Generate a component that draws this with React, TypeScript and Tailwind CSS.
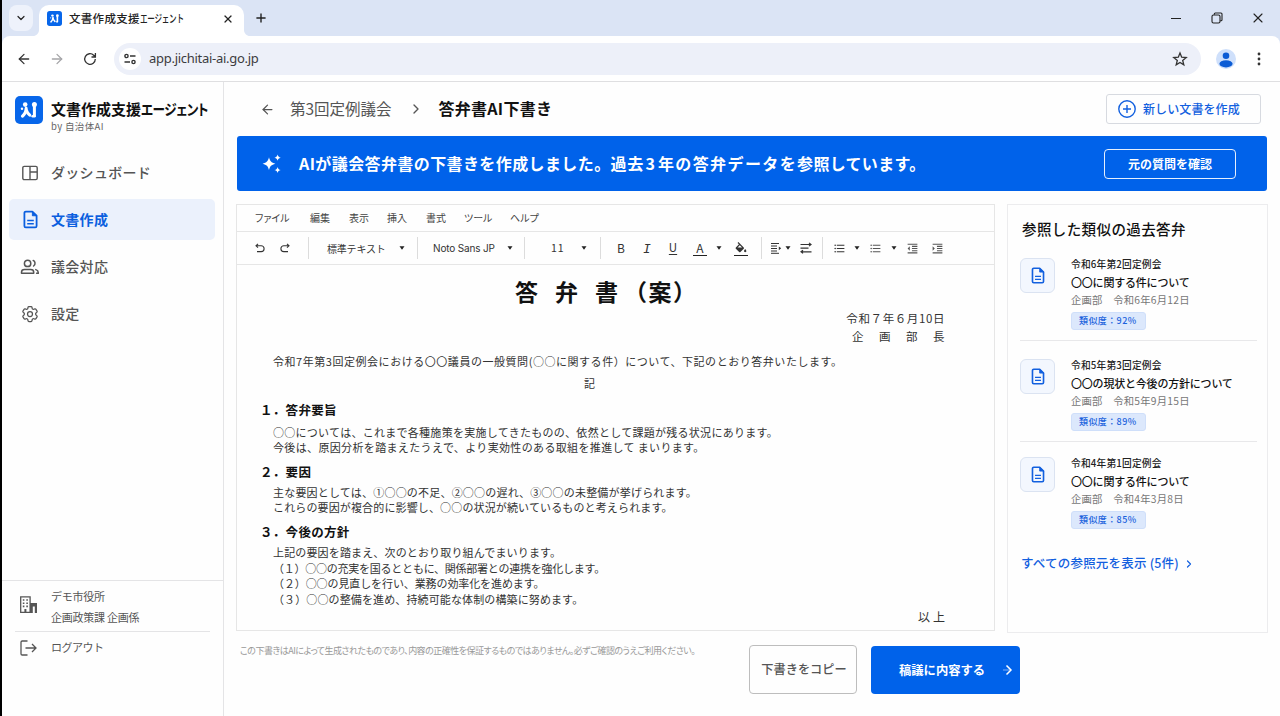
import React from 'react';
import { ArrowLeft, ArrowRight, ChevronDown, ChevronRight, Plus, X } from 'lucide-react';
import { HiOutlineCog6Tooth } from 'react-icons/hi2';
import { MdFormatIndentDecrease, MdFormatIndentIncrease, MdFormatListBulleted } from 'react-icons/md';

type IconProps = { className?: string };

const LogoMark: React.FC<IconProps> = ({ className }) => (
  <svg viewBox="0 0 28 28" className={className}>
    <rect width="28" height="28" rx="5" fill="#0766ea" />
    <g fill="none" stroke="#fff" strokeWidth="3" strokeLinecap="round">
      <path d="M11.2 12.2C11 16 9.5 18.6 7.4 20.2" />
      <path d="M11.4 14.2c.6 2 1.8 3.6 3.4 5" />
      <path d="M19.4 10v9.6" />
      <path d="M17.6 20.2h2" strokeWidth="2.4" />
    </g>
    <circle cx="10.2" cy="8.6" r="2.3" fill="#fff" />
    <circle cx="19.4" cy="8.6" r="2.5" fill="#fff" />
    <circle cx="7" cy="12.8" r="1.2" fill="#fff" />
  </svg>
);

const DashboardIcon: React.FC<IconProps> = ({ className }) => (
  <svg viewBox="0 0 16 16" fill="none" stroke="currentColor" strokeWidth="1.4" className={className}>
    <rect x="0.8" y="1.4" width="14.4" height="13.2" rx="1.4" />
    <path d="M8 1.4v13.2M8 7h7" />
  </svg>
);

const DocIcon: React.FC<IconProps> = ({ className }) => (
  <svg viewBox="0 0 16 20" fill="none" stroke="currentColor" strokeWidth="1.9" strokeLinejoin="round" className={className}>
    <path d="M10 1.5H3A1.5 1.5 0 0 0 1.5 3v14A1.5 1.5 0 0 0 3 18.5h10a1.5 1.5 0 0 0 1.5-1.5V6z" />
    <path d="M10 1.5V6h4.5z" fill="currentColor" strokeWidth="1" />
    <path d="M4.5 11h7M4.5 14.5h7" strokeWidth="1.6" />
  </svg>
);

const UsersIcon: React.FC<IconProps> = ({ className }) => (
  <svg viewBox="0 0 20 16" fill="none" stroke="currentColor" strokeWidth="1.5" strokeLinecap="round" className={className}>
    <circle cx="7.6" cy="4.4" r="3.2" />
    <path d="M1.5 14.3v-1.1c0-1.9 1.6-2.7 3-2.7h6.2c1.6 0 3 .9 3 2.7v1.1z" strokeLinejoin="round" />
    <path d="M13.2 1.5c2 .6 2.7 3.9.4 5.5M15.8 10.6c1.7.5 2.4 1.4 2.4 2.6v1.1h-1.6" />
  </svg>
);

const BuildingIcon: React.FC<IconProps> = ({ className }) => (
  <svg viewBox="0 0 17 17" className={className}>
    <path d="M.7 16.3V.8h9.4v15.5z" fill="none" stroke="currentColor" strokeWidth="1.3" />
    <path d="M2.8 3.2h1.6v1.6H2.8zM6.3 3.2h1.6v1.6H6.3zM2.8 6.4h1.6V8H2.8zM6.3 6.4h1.6V8H6.3zM2.8 9.6h1.6v1.6H2.8zM6.3 9.6h1.6v1.6H6.3zM4.4 13h2v3h-2z" fill="currentColor" />
    <path d="M10 7h7v10h-2.2v-6.6h-2V17H10z" fill="currentColor" />
  </svg>
);

const LogoutIcon: React.FC<IconProps> = ({ className }) => (
  <svg viewBox="0 0 17 16" fill="none" stroke="currentColor" strokeWidth="1.3" className={className}>
    <path d="M7.5 1H2.2C1.4 1 1 1.4 1 2.2v11.6c0 .8.4 1.2 1.2 1.2h5.3M5.5 8h10.3M12 4l4 4-4 4" />
  </svg>
);

const SparkleIcon: React.FC<IconProps> = ({ className }) => (
  <svg viewBox="0 0 20 20" fill="currentColor" className={className}>
    <path d="M7 3.3c1.1 4.2 2.2 5.2 6.4 6.4-4.2 1.2-5.3 2.2-6.4 6.4-1.1-4.2-2.2-5.2-6.4-6.4C4.8 8.5 5.9 7.5 7 3.3z" />
    <path d="M15.6.6c.6 2.1 1 2.5 3.1 3.1-2.1.6-2.5 1-3.1 3.1-.6-2.1-1-2.5-3.1-3.1 2.1-.6 2.5-1 3.1-3.1zM15.6 12.9c.6 2.1 1 2.5 3.1 3.1-2.1.6-2.5 1-3.1 3.1-.6-2.1-1-2.5-3.1-3.1 2.1-.6 2.5-1 3.1-3.1z" />
  </svg>
);

const StarIcon: React.FC<IconProps> = ({ className }) => (
  <svg viewBox="0 0 16 16" fill="none" stroke="currentColor" strokeWidth="1.3" className={className}>
    <path d="M8 2l1.7 4.2 4.5.3-3.5 2.9 1.1 4.4L8 11.4l-3.8 2.4 1.1-4.4-3.5-2.9 4.5-.3z" />
  </svg>
);

const FillIcon: React.FC<IconProps> = ({ className }) => (
  <svg viewBox="2 0 20 18" fill="currentColor" className={className}>
    <path d="M16.56 8.94L7.62 0 6.21 1.41l2.38 2.38-5.15 5.15a1.49 1.49 0 0 0 0 2.12l5.5 5.5c.29.29.68.44 1.06.44s.77-.15 1.06-.44l5.5-5.5c.59-.58.59-1.53 0-2.12zM6.21 9L10 5.21 13.79 9H6.21zM19 11.5s-2 2.17-2 3.5c0 1.1.9 2 2 2s2-.9 2-2c0-1.33-2-3.5-2-3.5z" />
  </svg>
);

const TabFlare: React.FC<IconProps> = ({ className }) => (
  <svg viewBox="0 0 6 6" fill="#fff" className={`absolute bottom-0 h-1.5 w-1.5 ${className}`}>
    <path d="M6 0v6H0c3.3 0 6-2.7 6-6z" />
  </svg>
);

const Caret: React.FC<IconProps> = ({ className = '' }) => (
  <svg viewBox="0 0 6 4" fill="#222" className={`h-1 w-1.5 shrink-0 ${className}`}>
    <path d="M.5.3h5L3 3.7z" />
  </svg>
);

const Separator: React.FC<IconProps> = ({ className = '' }) => (
  <div className={`h-[22px] w-px shrink-0 bg-[#dcdcdc] ${className}`} />
);

const navItems = [
  { label: 'ダッシュボード', icon: <DashboardIcon className="h-4 w-4" />, active: false },
  { label: '文書作成', icon: <DocIcon className="h-[19px] w-[15px]" />, active: true },
  { label: '議会対応', icon: <UsersIcon className="h-4 w-5" />, active: false },
  { label: '設定', icon: <HiOutlineCog6Tooth className="h-5 w-5" />, active: false },
];

const menus = [
  { label: 'ファイル', className: 'w-14 pl-px' },
  { label: '編集', className: 'w-[39px]' },
  { label: '表示', className: 'w-[38px]' },
  { label: '挿入', className: 'w-[39px]' },
  { label: '書式', className: 'w-[38px]' },
  { label: 'ツール', className: 'w-[46px]' },
  { label: 'ヘルプ', className: 'w-10' },
];

const references = [
  { session: '令和6年第2回定例会', title: '〇〇に関する件について', date: '令和6年6月12日', score: '92%', className: 'h-[83px]' },
  { session: '令和5年第3回定例会', title: '〇〇の現状と今後の方針について', date: '令和5年9月15日', score: '89%', className: 'mt-[18px] h-[83px]' },
  { session: '令和4年第1回定例会', title: '〇〇に関する件について', date: '令和4年3月8日', score: '85%', className: 'mt-[15px] h-[83px]' },
];

const BrowserChrome: React.FC = () => (
  <header className="shrink-0 bg-[#dbe4f5]">
    <div className="flex h-9 items-end">
      <div className="mb-[5px] ml-[7px] flex h-[26px] w-6 items-center justify-center rounded-lg bg-[#eef2fb]">
        <ChevronDown className="h-3 w-3 text-[#222]" strokeWidth={2.4} />
      </div>
      <div className="relative ml-1.5 flex h-[31px] w-[205px] items-center rounded-t-[10px] bg-white pb-1 pl-2">
        <TabFlare className="-left-1.5" />
        <LogoMark className="h-[15px] w-[15px] shrink-0" />
        <span className="ml-[7px] w-[116px] shrink-0 pb-0.5 text-[11.5px] font-medium leading-4 tracking-[0.3px] text-[#222]">
          文書作成支援
          <span className="inline-block origin-left scale-x-[0.69] text-[11px] tracking-[-0.4px]">エージェント</span>
        </span>
        <X className="ml-[37px] h-3 w-3 shrink-0 text-[#222]" strokeWidth={2.4} />
        <TabFlare className="-right-1.5 -scale-x-100" />
      </div>
      <Plus className="mb-[11px] ml-2.5 h-[14px] w-[14px] text-[#222]" strokeWidth={2.4} />
      <div className="mb-2.5 ml-auto mr-3.5 flex items-center text-[#222]">
        <div className="h-px w-2.5 bg-[#222]" />
        <svg viewBox="0 0 12 12" fill="none" stroke="currentColor" strokeWidth="1.1" className="ml-[30px] h-3 w-3">
          <rect x="1" y="3" width="8" height="8" rx="1.5" />
          <path d="M3.3 2.8V2c0-.6.4-1 1-1H10c.6 0 1 .4 1 1v5.7c0 .6-.4 1-1 1h-.8" />
        </svg>
        <X className="ml-[27px] h-4 w-4" strokeWidth={1.7} />
      </div>
    </div>
    <div className="flex h-[46px] items-center rounded-t-lg border-b border-[#dfdfe1] bg-white pl-[14px] text-[#333]">
      <ArrowLeft className="h-4 w-4" strokeWidth={1.9} />
      <ArrowRight className="ml-[17px] h-4 w-4 text-[#a5a5a8]" strokeWidth={1.9} />
      <svg viewBox="0 0 14 14" fill="none" stroke="currentColor" strokeWidth="1.3" className="ml-[18px] h-[14px] w-[14px]">
        <path d="M12.3 7a5.3 5.3 0 1 1-1.6-3.8l1.5 1.5M12.4 1v4H8.5" />
      </svg>
      <div className="ml-[17px] flex h-8 w-[1087px] items-center rounded-full bg-[#edf0f9] pl-[5px] pr-[13px]">
        <div className="flex h-[22px] w-[22px] items-center justify-center rounded-full bg-white">
          <svg viewBox="0 0 12 12" fill="none" stroke="#333" strokeWidth="1.4" className="h-3 w-3">
            <circle cx="2.5" cy="3" r="1.6" />
            <path d="M6 3h5.5M.5 9h5.5" />
            <circle cx="9.5" cy="9" r="1.6" />
          </svg>
        </div>
        <span className="ml-2 font-['Noto_Sans'] text-[13px] tracking-[-0.28px] text-[#3c3c40]">app.jichitai-ai.go.jp</span>
        <StarIcon className="ml-auto h-4 w-4" />
      </div>
      <svg viewBox="0 0 20 20" className="ml-[15px] h-5 w-5">
        <circle cx="10" cy="10" r="10" fill="#cfe0fb" />
        <circle cx="10" cy="6.8" r="3.3" fill="#0b5cd5" />
        <ellipse cx="10" cy="14.8" rx="6.6" ry="3.6" fill="#0b5cd5" />
      </svg>
      <svg viewBox="0 0 4 14" fill="#333" className="ml-[21px] h-[14px] w-1">
        <circle cx="2" cy="2" r="1.4" />
        <circle cx="2" cy="7" r="1.4" />
        <circle cx="2" cy="12" r="1.4" />
      </svg>
    </div>
  </header>
);

const Sidebar: React.FC = () => (
  <aside className="flex w-[222px] shrink-0 flex-col border-r border-[#e4e4e6]">
    <div className="flex pl-[13px] pt-[14px]">
      <LogoMark className="h-7 w-7 shrink-0" />
      <div className="ml-2">
        <p className="mt-[3px] w-[160px] text-[15px] font-bold leading-5 text-[#111]">
          文書作成支援<span className="inline-block origin-left scale-x-[0.84] tracking-[-0.5px] [font-feature-settings:'palt']">エージェント</span>
        </p>
        <p className="mt-px text-[9.5px] leading-3 tracking-[0.35px] text-[#666]">by 自治体AI</p>
      </div>
    </div>
    <nav className="mt-[20px] flex flex-col gap-1.5">
      {navItems.map((item) => (
        <div
          key={item.label}
          className={`ml-[7px] flex h-[41px] w-[206px] items-center rounded-[5px] ${
            item.active ? 'bg-[#ebf1fc] font-bold text-[#0b5fdf]' : 'font-medium text-[#555]'
          }`}
        >
          <div className="ml-[9px] flex w-6 justify-center">{item.icon}</div>
          <span className="ml-[9px] pb-0.5 text-[14px] leading-5 tracking-[0.3px]">{item.label}</span>
        </div>
      ))}
    </nav>
    <div className="mt-auto h-[136px] border-t border-[#e4e4e6] text-[11px] text-[#555]">
      <div className="flex h-[50px] items-center pl-[18px]">
        <BuildingIcon className="mb-[3px] h-[17px] w-[17px]" />
        <div className="ml-[14px] pt-px leading-[21px] tracking-[-0.25px]">
          <p>デモ市役所</p>
          <p>企画政策課 企画係</p>
        </div>
      </div>
      <div className="mx-[13px] border-t border-[#e4e4e6]" />
      <div className="flex h-[31px] items-center pl-[18px]">
        <LogoutIcon className="h-4 w-[17px]" />
        <span className="ml-[14px] tracking-[-0.5px]">ログアウト</span>
      </div>
    </div>
  </aside>
);

const EditorToolbar: React.FC = () => (
  <div className="flex h-[33px] items-center border-b border-[#e6e6e6] text-[#333]">
    <svg viewBox="0 0 12 12" fill="none" stroke="currentColor" strokeWidth="1.1" className="ml-[17px] h-3 w-3 shrink-0">
      <path d="M4 1.9L2 3.8l2 1.9M2 3.8h5.2a2.9 2.9 0 0 1 0 5.8H3" />
    </svg>
    <svg viewBox="0 0 12 12" fill="none" stroke="currentColor" strokeWidth="1.1" className="ml-[13px] h-3 w-3 shrink-0">
      <path d="M8 1.9l2 1.9-2 1.9M10 3.8H4.800a2.900 2.900 0 0 0 0 5.800H9" />
    </svg>
    <Separator className="ml-[17px]" />
    <span className="ml-[18px] w-[58px] shrink-0 text-[10px] tracking-[-0.2px]">標準テキスト</span>
    <Caret className="ml-[14px]" />
    <Separator className="ml-3" />
    <span className="ml-[15px] w-[62px] shrink-0 font-['Inter'] text-[10px] tracking-[-0.15px]">Noto Sans JP</span>
    <Caret className="ml-3" />
    <Separator className="ml-[11px]" />
    <span className="ml-[26px] w-3 shrink-0 text-[10.5px] tracking-[0.8px]">11</span>
    <Caret className="ml-[18px]" />
    <Separator className="ml-[13px]" />
    <span className="ml-[14px] w-3 shrink-0 text-center text-[12px]">B</span>
    <span className="ml-[14px] w-3 shrink-0 pt-[3px] text-center font-['Liberation_Mono'] text-[13px] italic leading-4">I</span>
    <span className="ml-[14px] w-3 shrink-0 text-center text-[11.5px] underline underline-offset-2">U</span>
    <span className="ml-[14px] h-[15px] w-[14px] shrink-0 border-b border-[#222] text-center text-[12px] leading-[13px]">A</span>
    <Caret className="ml-[9px]" />
    <span className="ml-3 flex h-[15px] w-[14px] shrink-0 justify-center border-b border-[#222] pt-px">
      <FillIcon className="h-[11px] w-3" />
    </span>
    <Separator className="ml-[13px]" />
    <svg viewBox="0 0 12 12" stroke="currentColor" strokeWidth="1" fill="currentColor" className="ml-2 h-3 w-3 shrink-0">
      <path d="M1 1.5h8M1 4h6M1 6.5h6M1 9h6M1 11.3h8" fill="none" />
      <path d="M8.8 4.4l2.4 1.9-2.4 1.9z" stroke="none" />
    </svg>
    <Caret className="ml-[3px]" />
    <svg viewBox="0 0 12 12" stroke="currentColor" strokeWidth="1.2" fill="none" className="ml-[9px] h-3 w-3 shrink-0">
      <path d="M.5 2.5h10M.5 6.2h8M1.5 9.8h10M9 .9l2 1.600-2 1.600M3 8.200L1 9.800l2 1.600" />
    </svg>
    <Separator className="ml-2.5" />
    <MdFormatListBulleted className="ml-2.5 h-[13px] w-[13px] shrink-0" />
    <Caret className="ml-2" />
    <MdFormatListBulleted className="ml-[9px] h-[13px] w-[13px] shrink-0 text-[#555]" />
    <Caret className="ml-[9px]" />
    <MdFormatIndentDecrease className="ml-[9px] h-[13px] w-[13px] shrink-0 text-[#555]" />
    <MdFormatIndentIncrease className="ml-3 h-[13px] w-[13px] shrink-0 text-[#555]" />
  </div>
);

const Editor: React.FC = () => (
  <section className="h-[427px] w-[759px] shrink-0 border border-[#e6e6e6]">
    <div className="flex h-[27px] items-center border-b border-[#e6e6e6] pb-0.5 pl-[17px] text-[10px] text-[#444]">
      {menus.map((menu) => (
        <span key={menu.label} className={`shrink-0 [font-feature-settings:'palt'] ${menu.className}`}>
          {menu.label}
        </span>
      ))}
    </div>
    <EditorToolbar />
    <article className="text-[11px] text-[#333]">
      <h1 className="ml-[278px] mt-2.5 text-[23px] font-bold leading-8 text-[#111]">
        <span className="tracking-[17px]">答弁</span>
        <span className="tracking-[6px]">書</span>
        <span className="tracking-[1.5px]">（案）</span>
      </h1>
      <p className="mr-[49px] mt-[3px] text-right text-[11.5px] leading-4 tracking-[0.6px]">令和７年６月10日</p>
      <p className="ml-[615px] mt-0.5 text-[11.5px] leading-4 tracking-[15.5px]">企画部長</p>
      <p className="ml-9 mt-[9px] leading-4 tracking-[0.54px]">
        令和7年第3回定例会における〇〇議員の一般質問(○○に関する件）について、下記のとおり答弁いたします。
      </p>
      <p className="ml-[347px] mt-1.5 leading-4">記</p>
      <h2 className="ml-[23px] mt-[11px] text-[12.5px] font-bold leading-4 tracking-[0.3px] text-[#111]">１．答弁要旨</h2>
      <div className="ml-9 mt-[7px] leading-[15px]">
        <p className="tracking-[0.28px]">○○については、これまで各種施策を実施してきたものの、依然として課題が残る状況にあります。</p>
        <p className="tracking-[0.35px]">今後は、原因分析を踏まえたうえで、より実効性のある取組を推進して まいります。</p>
      </div>
      <h2 className="ml-[23px] mt-[9px] text-[12.5px] font-bold leading-4 tracking-[0.3px] text-[#111]">２．要因</h2>
      <div className="ml-9 mt-[5px] leading-[15px]">
        <p className="tracking-[0.2px]">主な要因としては、①○○の不足、②○○の遅れ、③○○の未整備が挙げられます。</p>
        <p className="tracking-[0.14px]">これらの要因が複合的に影響し、○○の状況が続いているものと考えられます。</p>
      </div>
      <h2 className="ml-[23px] mt-[9px] text-[12.5px] font-bold leading-4 tracking-[0.3px] text-[#111]">３．今後の方針</h2>
      <div className="ml-9 mt-[5px] leading-[15.6px]">
        <p className="tracking-[0.15px]">上記の要因を踏まえ、次のとおり取り組んでまいります。</p>
        <p className="tracking-[-0.24px]">（１）○○の充実を国るとともに、関係部署との連携を強化します。</p>
        <p className="tracking-[-0.1px]">（２）○○の見直しを行い、業務の効率化を進めます。</p>
        <p className="tracking-[0.12px]">（３）○○の整備を進め、持続可能な体制の構築に努めます。</p>
      </div>
      <p className="mr-[46px] mt-0.5 text-right text-[12px] leading-4 tracking-[3px]">以上</p>
    </article>
  </section>
);

const ReferencePanel: React.FC = () => (
  <aside className="ml-3 h-[429px] w-[261px] shrink-0 border border-[#ececee]">
    <h2 className="ml-[14px] mt-[14px] text-[14.5px] font-medium leading-5 tracking-[0.4px] text-[#111]">
      参照した類似の過去答弁
    </h2>
    <div className="ml-3 mr-2.5 mt-[19px]">
      {references.map((ref, i) => (
        <div key={ref.session} className={`flex ${i < 2 ? 'border-b border-[#e8e8ea]' : ''} ${ref.className}`}>
          <div className="flex h-[35px] w-[35px] shrink-0 items-center justify-center rounded-md border border-[#dbe3f1] bg-[#f3f7fe]">
            <DocIcon className="h-[17px] w-[14px] text-[#1260df]" />
          </div>
          <div className="ml-4">
            <p className="-mt-0.5 text-[9.7px] font-medium leading-4 tracking-[0.2px] text-[#222]">{ref.session}</p>
            <p className="mt-0.5 text-[11px] font-medium leading-4 tracking-[-0.2px] text-[#111]">{ref.title}</p>
            <p className="mt-0.5 text-[10.3px] leading-4 tracking-[0.25px] text-[#777]">企画部　{ref.date}</p>
            <div className="mt-1 flex h-[18px] w-[75px] items-center rounded-[3px] border border-[#cfdffa] bg-[#dce8fc] pl-[7px] text-[9px] font-medium tracking-[0.4px] text-[#1a62dc]">
              類似度：{ref.score}
            </div>
          </div>
        </div>
      ))}
    </div>
    <div className="ml-[13px] mt-[13px] flex items-center text-[12.5px] font-medium text-[#1260df]">
      <span className="leading-5 tracking-[0.2px]">すべての参照元を表示 (5件)</span>
      <ChevronRight className="ml-1 mt-0.5 h-3 w-3" strokeWidth={2.4} />
    </div>
  </aside>
);

const App: React.FC = () => (
  <div className="flex h-[716px] w-[1280px] flex-col overflow-hidden whitespace-nowrap border-l-2 border-black bg-[#fefefe] font-['Noto_Sans_CJK_JP',sans-serif]">
    <BrowserChrome />
    <div className="flex min-h-0 flex-1">
      <Sidebar />
      <main className="flex-1 pl-3">
        <div className="flex h-[54px] items-center text-[#555]">
          <ArrowLeft className="ml-6 h-[15px] w-[15px]" strokeWidth={2} />
          <span className="ml-[15px] text-[15.5px]">第3回定例議会</span>
          <ChevronRight className="ml-4 h-4 w-4" strokeWidth={2} />
          <span className="ml-[15px] pb-0.5 text-[16px] font-bold tracking-[0.25px] text-[#111]">答弁書AI下書き</span>
          <button className="ml-auto mr-[19px] flex h-[30px] w-[155px] items-center rounded-[3px] border border-[#d7dae0] pl-[11px] text-[12px] font-medium text-[#1260df]">
            <svg viewBox="0 0 18 18" fill="none" stroke="currentColor" strokeWidth="1.4" className="h-[18px] w-[18px]">
              <circle cx="9" cy="9" r="8.2" />
              <path d="M9 5v8M5 9h8" />
            </svg>
            <span className="ml-[7px] tracking-[0.1px]">新しい文書を作成</span>
          </button>
        </div>
        <div className="ml-px flex h-[55px] w-[1030px] items-center rounded-[3px] bg-[#0062ea] text-white">
          <SparkleIcon className="ml-[25px] h-5 w-5" />
          <span className="ml-[17px] pb-0.5 text-[16px] font-bold tracking-[0.4px]">
            AIが議会答弁書の下書きを作成しました。<span className="tracking-[0.7px]">過去</span>
            <span className="ml-[1.5px] tracking-[3px]">3</span>
            <span className="tracking-[1.4px]">年の答弁データを</span>
            <span className="tracking-[0.3px]">参照しています。</span>
          </span>
          <button className="ml-auto mr-[31px] h-[30px] w-[132px] rounded border border-white/90 text-[12px] font-bold">
            元の質問を確認
          </button>
        </div>
        <div className="mt-[13px] flex h-[429px]">
          <Editor />
          <ReferencePanel />
        </div>
        <div className="flex">
          <p className="ml-1 mt-[10px] w-[509px] text-[9px] leading-4 tracking-[-0.52px] text-[#999] [font-feature-settings:'palt']">
            この下書きはAIによって生成されたものであり、内容の正確性を保証するものではありません。必ずご確認のうえご利用ください。
          </p>
          <button className="mt-[12px] h-[49px] w-[108px] rounded border border-[#bdbdbd] pl-0.5 text-[12.2px] font-medium text-[#555]">
            下書きをコピー
          </button>
          <button className="ml-[14px] mt-[13px] flex h-[48px] w-[149px] items-center rounded bg-[#0062ea] pl-[28px] text-[12.3px] font-bold text-white">
            稿議に内容する
            <svg viewBox="0 0 12 12" fill="none" stroke="currentColor" strokeWidth="1.5" className="ml-4 h-3 w-3">
              <path d="M5.5 1.5L10 6l-4.500 4.500" />
              <path d="M2 6h7.500" strokeOpacity="0.5" strokeWidth="1" />
            </svg>
          </button>
        </div>
      </main>
    </div>
  </div>
);

export default App;
